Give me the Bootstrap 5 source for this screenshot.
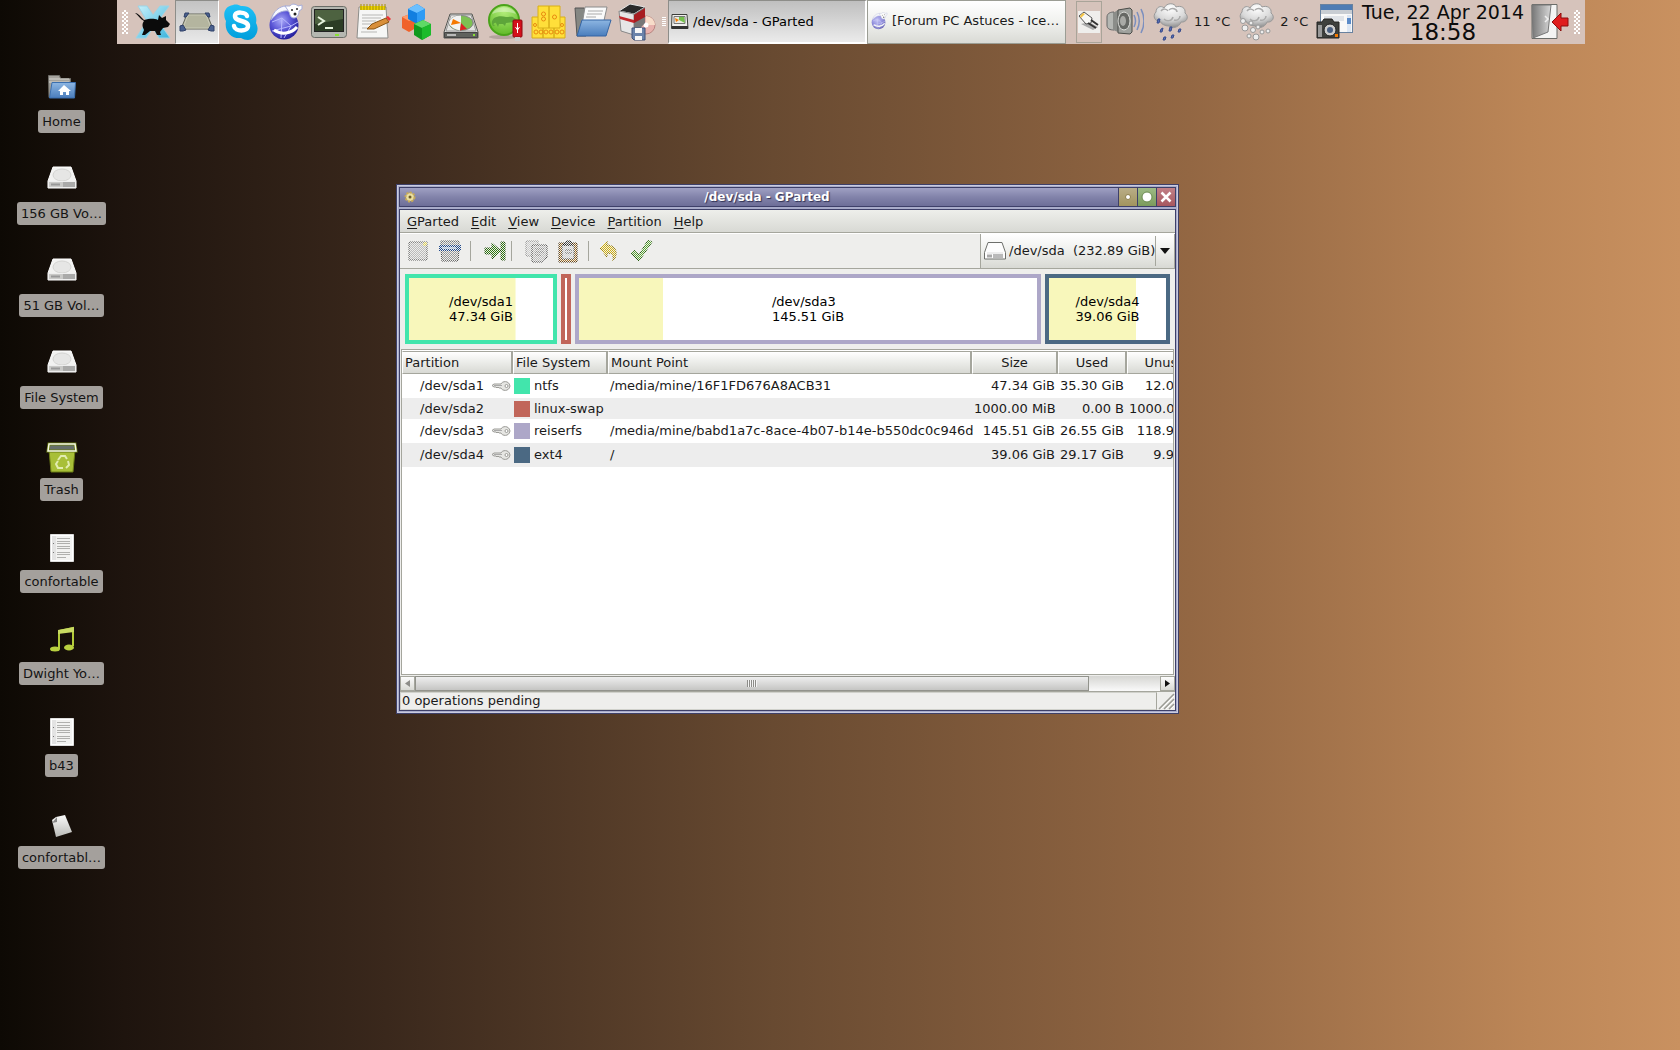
<!DOCTYPE html>
<html lang="en">
<head>
<meta charset="utf-8">
<meta name="viewport" content="width=device-width, initial-scale=1">
<title>/dev/sda - GParted</title>
<link href="https://cdn.jsdelivr.net/npm/bootstrap@5.3.0/dist/css/bootstrap.min.css" rel="stylesheet">
<style>
body{font-family:"DejaVu Sans",sans-serif;font-size:13px;line-height:16px;color:#1a1a1a;overflow:hidden;
 background:linear-gradient(90deg,#0d0904 0,#1e140e 7.4%,#3a281c 23%,#684a31 46%,#936743 70.8%,#bc8657 91%,#c99160 100%)}
button,select{font:inherit;color:inherit;padding:0;border:0;background:none}
svg{display:block;flex:none}
/* panel */
.desk-panel{height:44px;margin:0 95px 0 117px;background:#d6c3bb}
.grip{width:6px;height:24px;margin:0 3px 0 5px;background:repeating-conic-gradient(#fff 0 25%,transparent 0 50%) 0 0/4px 4px}
.grip-end{margin:0 5px 0 2px}
.grip-sm{width:4px;height:10px;margin:0 2px 0 3px;background:repeating-linear-gradient(#fff 0 1px,transparent 1px 2px)}
.launch{width:44px;height:44px;display:grid;place-items:center}
.launch.pressed{border:1px solid #8d8d89;border-right-color:#fff;border-bottom-color:#fff;background:linear-gradient(#c3c3c3,#e9e9e9)}
.task{height:44px;flex:1 1 0;min-width:0;max-width:199px;padding:0 6px 2px 2px;gap:4px;border:1px solid #9b9d94;background:linear-gradient(#fff,#f0f1ee 50%,#d9dad5)}
.task.pressed{border-width:1px 2px 2px 1px;border-color:#8d8d89 #fff #fff #8d8d89;background:linear-gradient(#bfbfbf,#ebebeb);color:#000;padding-bottom:0}
.usb{width:26px;height:42px;border:1px solid #a9a499;margin:0 4px 0 10px;display:grid;place-items:center}
.usb span{width:22px;height:22px;background:#efeeec}
.meteo{gap:4px;margin-left:9px}
.clock{width:170px;font-size:19px;line-height:19px;color:#0c0c0c;white-space:nowrap}
.clock-time{font-size:23px;line-height:20px}
/* desktop icons */
.desk-icons{width:123px;padding-top:22px}
.desk-item{height:92px;color:#111;text-decoration:none}
.desk-pic{height:44px}
.desk-label{height:23px;line-height:24px;padding:0 4px;border-radius:3px;background:#a4a09c;color:#141414}
/* window */
.win{position:absolute;left:396px;top:184px;width:783px;border:1px solid #3e4069;background:#a9acca;padding:2px;box-shadow:inset 0 0 0 1px #c9cbe0}
.win-title{border:1px solid #3e4069;height:20px;background:linear-gradient(#9fa0c3,#8283aa 50%,#6d6e98);color:#fff;font-size:12px;font-weight:bold;text-shadow:1px 1px 1px #2e3052}
.win-title .wbtn{width:19px;height:18px;border-left:1px solid #3e4069;display:grid;place-items:center}
.w-min{background:linear-gradient(#b9ad87,#a2945f)}
.w-max{background:linear-gradient(#9dba85,#7c9b5c)}
.w-close{background:linear-gradient(#c18087,#a7575f)}
.win-body{border:1px solid #3e4069;margin-top:2px;background:#eeeeec}
.menu-row{height:23px;padding:2px 0 0 1px;background:linear-gradient(#eeefeb,#d8d9d4);border-bottom:1px solid #a5a69d}
.menu-row button{padding:0 6px}
.menu-row u{text-underline-offset:2px}
.tool-row{height:36px;border-bottom:1px solid #a5a69d;border-top:1px solid #fff}
.tool{position:relative;width:24px;height:24px}
.tool::after{content:"";position:absolute;inset:0;background:repeating-conic-gradient(#eeeeec 0 25%,transparent 0 50%) 0 0/2px 2px}
.tsep{width:1px;height:20px;background:#a5a69d}
.device{width:195px;height:35px;border:1px solid #a5a69d;border-top:0;background:linear-gradient(#fff,#eeefec 50%,#d8d9d4);padding-left:3px}
.device select{appearance:none;flex:1;min-width:0;margin-left:3px;height:30px;outline:0}
.device .arrow{width:19px;height:30px;border-left:1px solid #a5a69d;display:grid;place-items:center}
.parts{height:80px;padding:5px;gap:4px}
.part{height:70px;border:4px solid;background:#fff linear-gradient(#f8f7bb,#f8f7bb) no-repeat;background-size:0 100%;display:grid;place-items:center;line-height:15px;color:#000}
.c-ntfs{border-color:#42e5ac}.c-swap{border-color:#c1665a}.c-reiser{border-color:#ada7c8}.c-ext4{border-color:#4b6983}
.swatch{width:16px;height:16px;flex:none;border:8px solid}
.c-ntfs.swatch{border-color:#42e5ac}.c-swap.swatch{border-color:#c1665a}.c-reiser.swatch{border-color:#ada7c8}.c-ext4.swatch{border-color:#4b6983}
.list-box{height:326px;margin:0 1px;border:1px solid #a5a69d;background:#fff;padding:1px 0 0}
.grid-tbl{table-layout:fixed;width:810px;border-collapse:separate;border-spacing:0}
.grid-tbl th{height:23px;padding:0 2px;font-weight:normal;border:1px solid #a5a69d;border-left-color:#fff;border-right-width:2px;background:linear-gradient(#fff,#edeeeb 45%,#d8d9d4)}
.grid-tbl td{height:24px;padding:0 2px;white-space:nowrap}
.grid-tbl tr.tight td{height:21px}
.grid-tbl tbody tr:nth-child(even) td{background:#ededed}
.grid-tbl .num{text-align:right;padding-right:3px}
.grid-tbl .dev{padding-left:18px}
.grid-tbl .fs{padding-left:1px}
.sbar{height:15px;margin-top:1px;background:linear-gradient(#d5d5d2,#fafafa)}
.sbar button{width:15px;height:15px;border:1px solid #a5a69d;background:linear-gradient(#fcfcfc,#d9dad5);display:grid;place-items:center}
.thumb{width:674px;border:1px solid #92938c;background:linear-gradient(#eee,#c5c5c3);display:grid;place-items:center}
.thumb span{width:10px;height:7px;background:repeating-linear-gradient(90deg,#8d8d89 0 1px,#f4f4f4 1px 2px)}
.status{height:19px;border-top:1px solid #a5a69d}
.status-text{line-height:16px;padding-left:1px;border:1px solid #d0d1cb;border-right-color:#a5a69d}
</style>
<script src="https://cdn.jsdelivr.net/npm/bootstrap@5.3.0/dist/js/bootstrap.bundle.min.js"></script>
</head>
<body class="vh-100">
<svg width="0" height="0" class="position-absolute" aria-hidden="true">
<defs>
<linearGradient id="gSteel" x1="0" y1="0" x2="0" y2="1"><stop offset="0" stop-color="#fafafa"/><stop offset="1" stop-color="#b9bab6"/></linearGradient>
<linearGradient id="gBlue" x1="0" y1="0" x2="0" y2="1"><stop offset="0" stop-color="#8db6e2"/><stop offset="1" stop-color="#4a7dbc"/></linearGradient>
<linearGradient id="gCyan" x1="0" y1="0" x2="1" y2="1"><stop offset="0" stop-color="#c9f1fb"/><stop offset="1" stop-color="#3bb4dc"/></linearGradient>
<linearGradient id="gSky" x1="0" y1="0" x2="0" y2="1"><stop offset="0" stop-color="#1fc0f6"/><stop offset="1" stop-color="#009edb"/></linearGradient>
<linearGradient id="gGray" x1="0" y1="0" x2="1" y2="0"><stop offset="0" stop-color="#777"/><stop offset="1" stop-color="#d8d8d8"/></linearGradient>
<radialGradient id="gGlobe" cx=".4" cy=".35" r=".7"><stop offset="0" stop-color="#a9a9f8"/><stop offset=".5" stop-color="#5a55d6"/><stop offset="1" stop-color="#1f1a96"/></radialGradient>
<radialGradient id="gCloud" cx=".5" cy=".2" r=".8"><stop offset="0" stop-color="#fff"/><stop offset=".6" stop-color="#d8d8d8"/><stop offset="1" stop-color="#8b8b8b"/></radialGradient>
<radialGradient id="gLime" cx=".5" cy=".2" r=".9"><stop offset="0" stop-color="#b4ee7c"/><stop offset="1" stop-color="#56b31e"/></radialGradient>
<symbol id="drive" viewBox="0 0 30 24"><path d="M6 1h18l5 14v7H1v-7z" fill="#f2f2f1" stroke="#fff"/><ellipse cx="15" cy="9" rx="9" ry="6" fill="#e6e6e5" stroke="#d4d4d2"/><path d="M1.500 15.500h27v6h-27z" fill="#c9c9c7" stroke="#eee"/><path d="M4 18.500h9" stroke="#999" stroke-width="2"/><path d="M17 16v5M19 16v5M21 16v5M23 16v5M25 16v5M27 16v5" stroke="#8b8b8b"/></symbol>
<symbol id="textdoc" viewBox="0 0 24 28"><path d="M.5.5h23v27H.5z" fill="#fff" stroke="#ddd"/><path d="M2 2h4v24H2z" fill="#e3e3e3"/><path d="M6 2h16v24H6z" fill="#f2f2f1"/><path d="M7 4.500h13M7 7.500h13M7 9.500h13M7 12.500h13M7 14.500h13M7 18.500h13M7 20.500h13M7 23.500h9" stroke="#b0b0ae"/><path d="M3 9h1v1H3zM3 18h1v1H3z" fill="#777"/></symbol>
<symbol id="disk" viewBox="0 0 36 30"><path d="M7 3h22l6 18v6H1v-6z" fill="#d9d9d7" stroke="#555753"/><path d="M8 4h20l5 16H3z" fill="#e4e4e2" stroke="#999"/><ellipse cx="18" cy="12" rx="12" ry="7.500" fill="#7dc152" stroke="#888"/><path d="M18 12V4.500c-7 0-12 3.500-12 7.500 1 4 6 6.500 11 7.500z" fill="#f3f3f3"/><path d="M10 8l8 4-10 2z" fill="#f57900"/><path d="M18 12l6 6-7 1.500z" fill="#d22"/><path d="M1.500 21.500h33v5h-33z" fill="#60625e" stroke="#444"/><path d="M4 24h9" stroke="#bbb" stroke-width="2"/><path d="M30 24h2" stroke="#8ae234" stroke-width="2"/></symbol>
<symbol id="globe" viewBox="0 0 36 38"><circle cx="17" cy="22" r="14.500" fill="url(#gGlobe)"/><path d="M5 19l10-4 9 8-7 12M15 15l-1 20M24 23l7-4M5 28l19-5" fill="none" stroke="#b9b9ff"/><path d="M4 17C6 8 13 3 19 3l3 5C14 7 9 11 4 17z" fill="#f7f8ff" stroke="#a7add8"/><path d="M7 27c7 5 17 4 23-3" fill="none" stroke="#fff" stroke-width="3"/><path d="M18 3l5 0c2-3 6-2 8 0l4-1v4l-3 2c0 4-2 7-5 7-4 0-4-4-5-6z" fill="#fff" stroke="#a7add8"/><circle cx="25" cy="7" r="1" fill="#222"/><circle cx="30" cy="6" r="1" fill="#222"/><circle cx="28" cy="11" r="1.500" fill="#222"/></symbol>
<symbol id="cloud" viewBox="0 0 36 26"><path d="M7 18C2 19-1 13 3 9c0-5 5-7 8-4 3-6 11-5 12-1 5-2 10 1 9 6 5 4 1 10-4 9-2 6-10 7-12 4-4 0-8-2-9-5z" fill="url(#gCloud)" stroke="#999"/><path d="M8 8c2-3 6-2 7 0M16 7c3-3 8-1 8 2M11 16c3 3 8 2 9-2M21 17c3 1 6-1 6-4" fill="none" stroke="#aaa" stroke-width="1.500"/></symbol>
<symbol id="key" viewBox="0 0 20 12"><path d="M1 5.500l2-1.500h7C11 1 18 0 19 6c-1 6-8 5-9 2H8L7 7 6 8 5 7H3z" fill="#e6e6e3" stroke="#9b9b97"/><circle cx="15.500" cy="6" r="1.500" fill="#fff" stroke="#9b9b97"/><path d="M3 5.500h8" stroke="#aaa"/></symbol>
</defs>
</svg>

<header class="desk-panel d-flex align-items-center">
 <span class="grip"></span>
 <button class="launch" aria-label="Applications"><svg width="36" height="38" viewBox="0 0 36 38"><path d="M3 3h9l6 9 7-9h9L23 18l12 17H24l-6-10-7 10H1l11-17z" fill="url(#gCyan)" stroke="#9bd4e6"/><path d="M0 10c3 0 5 3 9 7 5-1 9-2 14 0l1-5 3 3 4-2v4l4 4-2 3-5 1-3 4 1 3h-4l-2-4h-5l-5 4H7l2-5c-2-4-2-6 0-9C5 16 3 12 0 10z" fill="#0b0b0b"/></svg></button>
 <button class="launch pressed" aria-label="Show desktop"><svg width="36" height="20" viewBox="0 0 36 20"><path d="M8 2h20l6 15H2z" fill="#b4b59f" stroke="#65675b"/><path d="M9 3h18l5 13H4z" fill="none" stroke="#c9cab8"/><g fill="#4a618f" stroke="#2f4068"><path d="M6 1h4l-3 4H5zM26 1h4l1 4h-2zM1 14l3-1 3 5-3 1H1zM35 14l-3-1-3 5 3 1h3z"/></g></svg></button>
 <button class="launch" aria-label="Skype"><svg width="36" height="38" viewBox="0 0 36 38"><path d="M10 2c3-1 6 0 8 1 10-1 17 8 15 17 4 7 0 16-8 17-3 0-5-1-7-2C8 36 1 28 3 18-1 11 2 3 10 2z" fill="url(#gSky)"/><path d="M24 13c-1-4-12-5-12 0 0 6 13 4 13 10 0 6-13 6-14 0" fill="none" stroke="#fff" stroke-width="4.500" stroke-linecap="round"/></svg></button>
 <button class="launch" aria-label="Iceweasel"><svg width="36" height="38"><use href="#globe"/></svg></button>
 <button class="launch" aria-label="Terminal"><svg width="36" height="32" viewBox="0 0 36 32"><rect x=".5" y=".5" width="35" height="31" rx="3" fill="#b5b7b0" stroke="#6b6d67"/><rect x="3.500" y="3.500" width="29" height="22" fill="#2c3d25" stroke="#222"/><path d="M4 4h28v9L4 18z" fill="#4d6240"/><path d="M7 11l6 4-6 4" fill="none" stroke="#e8f5df" stroke-width="2"/><path d="M14 22h8" stroke="#e8f5df" stroke-width="2"/><path d="M24 29h4" stroke="#8ae234" stroke-width="2"/></svg></button>
 <button class="launch" aria-label="Notes"><svg width="36" height="36" viewBox="0 0 36 36"><path d="M4 3h27l2 31H2z" fill="#f6f6f5" stroke="#8d8d8a"/><path d="M5 2h25v4H5z" fill="#edd400"/><path d="M6 0v6M9 0v6M12 0v6M15 0v6M18 0v6M21 0v6M24 0v6M27 0v6M30 0v6" stroke="#a38d06"/><path d="M7 11h21M7 14h19M7 17h14M7 20h10M7 24h8M6 28h16" stroke="#b7b7b5"/><path d="M12 25l5-5 14-6 3 4-15 7z" fill="#d98f3a" stroke="#8a5413"/><path d="M31 13l2-1 3 3-2 2z" fill="#e33"/></svg></button>
 <button class="launch" aria-label="Packages"><svg width="32" height="36" viewBox="0 0 32 36"><path d="M1 13l8-3 6 4v10l-7 4-7-4z" fill="#f0622a"/><path d="M1 13l8-3 6 4-7 3z" fill="#ff9a6a"/><path d="M7 5l9-5 8 5v10l-8 5-9-5z" fill="#127fe0"/><path d="M7 5l9-5 8 5-8 4z" fill="#6cc0ff"/><path d="M16 9v11l8-5V5z" fill="#2f9bf4"/><path d="M13 20l9-4 8 4v11l-9 5-8-5z" fill="#0f9a1e"/><path d="M13 20l9-4 8 4-9 4z" fill="#5fd966"/><path d="M21 24v12l9-5V20z" fill="#1cbb2b"/></svg></button>
 <button class="launch pt-2" aria-label="GParted"><svg width="36" height="30"><use href="#disk"/></svg></button>
 <button class="launch" aria-label="ImageWriter"><svg width="36" height="38" viewBox="0 0 36 38"><ellipse cx="16" cy="34" rx="14" ry="2" fill="#b3a39c"/><circle cx="17" cy="17" r="15" fill="url(#gLime)" stroke="#4aa31a" stroke-width="2"/><path d="M5 21c-1-7 7-9 14-7 4 0 7-1 8 1l4 2-4 2-8 1-1 3-2-2h-4l-1 3-2-4c-2-1-4 3-1 2-1 2-3 1-3-2z" fill="#5da53a"/><path d="M5 11c4-9 20-9 24 0-7-3-17-3-24 0z" fill="#fff" opacity=".35"/><rect x="26" y="17" width="9" height="17" rx="1" fill="#d4101c" stroke="#8e0810"/><path d="M28 34h5v4h-5z" fill="#ccc"/><path d="M30.500 20v10M28.500 24l2 3 2-3" stroke="#fff" fill="none"/></svg></button>
 <button class="launch" aria-label="Mahjongg"><svg width="36" height="34" viewBox="0 0 36 34"><g fill="#ffdf3a" stroke="#d8ae18"><path d="M1 12h11v21H1zM12 12h11v21H12zM23 12h11v21H23z"/><path d="M7 1h11v22H7zM18 1h11v22H18z"/></g><g fill="none" stroke="#e88a10"><circle cx="12.500" cy="9" r="2"/><circle cx="12.500" cy="14" r="2"/><circle cx="23.500" cy="12" r="2"/><circle cx="4" cy="20" r="1.500"/><circle cx="5" cy="27" r="2"/><circle cx="10" cy="27" r="2"/><circle cx="15" cy="27" r="2"/><circle cx="20" cy="27" r="2"/><circle cx="26" cy="27" r="2"/><circle cx="31" cy="27" r="2"/><circle cx="31" cy="20" r="1.500"/></g></svg></button>
 <button class="launch" aria-label="Files"><svg width="38" height="32" viewBox="0 0 38 32"><path d="M1 2h9l2 3v25H3z" fill="#858783" stroke="#555"/><path d="M11 1h22l-4 18H8z" fill="#fafafa" stroke="#8b8b8b"/><path d="M14 5h15M13 8h15M12 11h10" stroke="#aaa"/><path d="M8 14h29l-5 16H3z" fill="url(#gBlue)" stroke="#3465a4"/></svg></button>
 <button class="launch" aria-label="Software installer"><svg width="38" height="38" viewBox="0 0 38 38"><circle cx="28" cy="22" r="9" fill="#e7b1ad" stroke="#b98580"/><path d="M28 13a9 9 0 0 1 9 9h-9z" fill="#f7dcc9"/><circle cx="28" cy="22" r="2.500" fill="#fff"/><path d="M1 8L12 1l15 3-11 7z" fill="#2a2a2a" stroke="#e5e5e5"/><path d="M1 8l15 3v21L3 28z" fill="#e6e6e6" stroke="#888"/><path d="M1 13l15 4v3L2 16z" fill="#c3272b"/><path d="M16 11L27 4v16l-11 12z" fill="#777"/><path d="M16 12l11-7v9l-11 6z" fill="#a81c20"/><path d="M14 25h13v12H16l-2-2z" fill="#6b83aa" stroke="#3c5178"/><path d="M17 25h7v5h-7zM17 33h7v4h-7z" fill="#f5f5f5"/></svg></button>
 <span class="grip-sm"></span>
 <button class="task pressed d-flex align-items-center"><svg width="18" height="16" viewBox="0 0 18 16"><path d="M1 .5h15l1 14H.5z" fill="#f0f0ee" stroke="#3c3e3a"/><path d="M3 2.500h11v7H3z" fill="#e9e9e2" stroke="#777"/><path d="M8 6V3h5l1 6z" fill="#73c04c"/><path d="M4 4l4 2-3 2z" fill="#f57900"/><path d="M1 12h16v3H1z" fill="#333"/></svg><span class="text-truncate">/dev/sda - GParted</span></button>
 <button class="task d-flex align-items-center"><svg width="18" height="18" opacity=".6"><use href="#globe"/></svg><span class="text-nowrap">[Forum PC Astuces - Ice…</span></button>
 <div class="usb"><span><svg width="22" height="22" viewBox="0 0 22 22"><path d="M3 13l12 6 5-3-9-5z" fill="#aaa"/><path d="M1 5l5-4 8 6-1 5-5 1z" fill="#f8f8f6" stroke="#555"/><path d="M2 5l3-3 2 1-4 4z" fill="#f6c544"/><path d="M13 9l7 5M10 12l8 5" stroke="#333" stroke-width="2"/></svg></span></div>
 <svg width="38" height="30" viewBox="0 0 38 30"><path d="M1 10c0-4 4-5 7-5v18c-4 0-7-1-7-5z" fill="#b5b7b3" stroke="#666"/><path d="M7 6l5-3v22l-5-2z" fill="#8b8d89"/><path d="M12 3l12-2 2 2v22l-2 2-12-1z" fill="#9fa19d" stroke="#4a4c48"/><ellipse cx="18" cy="14" rx="6" ry="9" fill="#666864" stroke="#dcddd9"/><ellipse cx="17" cy="14" rx="3" ry="5" fill="#a9aaa6"/><path d="M28 8c2 4 2 8 0 12M31 5c3 6 3 12 0 18M35 2c4 8 4 16 0 24" fill="none" stroke="#7b8fbf" stroke-width="1.500"/></svg>
 <div class="meteo d-flex align-items-center"><svg width="37" height="38" viewBox="0 0 37 38"><use href="#cloud" width="36" height="26"/><g fill="#5b72b8" stroke="#384c8c"><path d="M5 16l2 0-1 4h-2zM8 26l2-1-1 4h-2zM17 24h2l-1 4h-2zM26 26h2l-1 3h-2zM19 32h2l-1 3h-2zM11 34h2l-1 3h-2z"/></g></svg><span>11 °C</span></div>
 <div class="meteo d-flex align-items-center"><svg width="37" height="38" viewBox="0 0 37 38"><use href="#cloud" width="36" height="26"/><g fill="#eee" stroke="#999"><circle cx="4" cy="18" r="2.500"/><circle cx="12" cy="20" r="2"/><circle cx="6" cy="25" r="3"/><circle cx="14" cy="27" r="2.500"/><circle cx="23" cy="29" r="2"/><circle cx="29" cy="28" r="2"/><circle cx="17" cy="34" r="3"/><circle cx="10" cy="33" r="2"/><circle cx="19" cy="24" r="2"/></g></svg><span>2 °C</span></div>
 <button class="launch ms-1" aria-label="Screenshot"><svg width="37" height="36" viewBox="0 0 37 36"><rect x="4.500" y=".5" width="32" height="28" fill="#f8f8f8" stroke="#69829f"/><path d="M5 1h31v5H5z" fill="#4e7cb4"/><path d="M5 6h31v4H5z" fill="#c8cdd3"/><path d="M8 12h20v5H8z" fill="#dfe3e8"/><path d="M31 11h4v17h-4z" fill="#dce6f3"/><path d="M31 14h4v6h-4z" fill="#5a8ac8"/><path d="M1 18h5l2-3h8l2 3h5v16H1z" fill="#3e403d" stroke="#222"/><path d="M2 21h4v12H2z" fill="#999"/><circle cx="14" cy="26" r="6" fill="#ccc" stroke="#222"/><circle cx="14" cy="26" r="3" fill="#4a5f80"/><path d="M19 30h3v3h-3z" fill="#f57900"/></svg></button>
 <time class="clock text-center ms-auto" datetime="2014-04-22T18:58"><div>Tue, 22 Apr 2014</div><div class="clock-time">18:58</div></time>
 <button class="launch" aria-label="Log out"><svg width="38" height="36" viewBox="0 0 38 36"><path d="M1 .5h25v34H1z" fill="#f4f4f3" stroke="#6b6d69"/><path d="M1 1h19L17 28 2 34z" fill="url(#gGray)" stroke="#777"/><path d="M14 12l3 3-3 3" fill="none" stroke="#eee" stroke-width="1.500"/><path d="M21 18l9-9v5h7v8h-7v5z" fill="#df1d1d" stroke="#8c0d0d"/></svg></button>
 <span class="grip grip-end"></span>
</header>

<nav class="desk-icons d-flex flex-column" aria-label="Desktop">
 <a class="desk-item d-flex flex-column align-items-center" href="#"><span class="desk-pic pt-2"><svg width="28" height="25" viewBox="0 0 28 25"><path d="M.5 1.500h11l1 3h10v19H1z" fill="#a5a39d" stroke="#6f6e69"/><path d="M1 5h20M1 8h20" stroke="#d4d3cf"/><path d="M4 8.500h23.500L26.500 24H1.500z" fill="url(#gBlue)" stroke="#3b6fae"/><path d="M16 11l7 6h-2v4h-3v-3h-3v3h-3v-4h-2z" fill="#fff"/></svg></span><span class="desk-label">Home</span></a>
 <a class="desk-item d-flex flex-column align-items-center" href="#"><span class="desk-pic pt-2"><svg width="30" height="24"><use href="#drive"/></svg></span><span class="desk-label">156 GB Vo…</span></a>
 <a class="desk-item d-flex flex-column align-items-center" href="#"><span class="desk-pic pt-2"><svg width="30" height="24"><use href="#drive"/></svg></span><span class="desk-label">51 GB Vol…</span></a>
 <a class="desk-item d-flex flex-column align-items-center" href="#"><span class="desk-pic pt-2"><svg width="30" height="24"><use href="#drive"/></svg></span><span class="desk-label">File System</span></a>
 <a class="desk-item d-flex flex-column align-items-center" href="#"><span class="desk-pic pt-2"><svg width="32" height="31" viewBox="0 0 32 31"><path d="M3 8h26l-2 22H5z" fill="#a8bf38" stroke="#6b7c14"/><path d="M3 2h26l1 7H2z" fill="#66706a" stroke="#6b7c14" stroke-width="3"/><path d="M3 2h26l1 7H2z" fill="none" stroke="#f4f8e6" stroke-width="1.500"/><path d="M12 18l3-4h4l2 3M22 19l1 4-3 3M17 26h-5l-2-4 2-3" fill="none" stroke="#e2ecb0" stroke-width="2"/></svg></span><span class="desk-label">Trash</span></a>
 <a class="desk-item d-flex flex-column align-items-center" href="#"><span class="desk-pic pt-2"><svg width="24" height="28"><use href="#textdoc"/></svg></span><span class="desk-label">confortable</span></a>
 <a class="desk-item d-flex flex-column align-items-center" href="#"><span class="desk-pic pt-2"><svg width="26" height="26" viewBox="0 0 26 26"><path d="M10 23V5l14-3v18" fill="none" stroke="#b4cc3a" stroke-width="2"/><path d="M9 4l16-3v5L9 8z" fill="#c8da62"/><ellipse cx="6" cy="23" rx="5" ry="2.500" fill="#b9d040"/><ellipse cx="20" cy="21.500" rx="5" ry="3" fill="#b9d040"/></svg></span><span class="desk-label">Dwight Yo…</span></a>
 <a class="desk-item d-flex flex-column align-items-center" href="#"><span class="desk-pic pt-2"><svg width="24" height="28"><use href="#textdoc"/></svg></span><span class="desk-label">b43</span></a>
 <a class="desk-item d-flex flex-column align-items-center" href="#"><span class="desk-pic pt-2"><svg width="22" height="28" viewBox="0 -5 22 28"><path d="M1 5l4-3 9-2 7 17-16 5z" fill="url(#gSteel)"/><path d="M1 8l5-1V2z" fill="#888"/></svg></span><span class="desk-label">confortabl…</span></a>
</nav>

<main class="win">
 <div class="win-title d-flex align-items-center">
  <svg class="ms-1" width="12" height="12" viewBox="0 0 12 12"><circle cx="6" cy="6" r="4" fill="#e8d58c" stroke="#c5a95a" stroke-width="3" stroke-dasharray="2 1"/><circle cx="6" cy="6" r="3.500" fill="#eadf9f"/><circle cx="6" cy="6" r="1.500" fill="#6b5a2c"/></svg>
  <span class="flex-fill text-center">/dev/sda - GParted</span>
  <button class="wbtn w-min" aria-label="Minimize"><svg width="14" height="14" viewBox="0 0 14 14"><circle cx="7" cy="7" r="2.500" fill="#fff" stroke="#8c7e4c"/></svg></button>
  <button class="wbtn w-max" aria-label="Maximize"><svg width="14" height="14" viewBox="0 0 14 14"><circle cx="7" cy="7" r="5" fill="#fff" stroke="#6b8a50"/></svg></button>
  <button class="wbtn w-close" aria-label="Close"><svg width="14" height="14" viewBox="0 0 14 14"><path d="M2.500 2.500l9 9M11.500 2.500l-9 9" stroke="#fff" stroke-width="2.500"/></svg></button>
 </div>
 <div class="win-body">
  <div class="menu-row d-flex align-items-center"><button><u>G</u>Parted</button><button><u>E</u>dit</button><button><u>V</u>iew</button><button><u>D</u>evice</button><button><u>P</u>artition</button><button><u>H</u>elp</button></div>
  <div class="tool-row d-flex align-items-center">
   <button class="tool" style="margin-left:6px" aria-label="New"><svg width="24" height="24" viewBox="0 0 24 24"><path d="M3 3h18v18H3z" fill="#bbb" stroke="#555"/><circle cx="19" cy="5" r="2" fill="#ead94c"/></svg></button>
   <button class="tool ms-2" aria-label="Delete"><svg width="24" height="24" viewBox="0 0 24 24"><path d="M3 10h18l-1 12H4z" fill="#999" stroke="#444"/><path d="M3 2h18v5H3z" fill="#999" stroke="#555"/><path d="M1 6h22v6H1z" fill="#224a8c"/><path d="M4 9h14" stroke="#cde" stroke-width="1.500"/></svg></button>
   <span class="tsep mx-2"></span>
   <button class="tool ms-1" aria-label="Resize"><svg width="24" height="24" viewBox="0 0 24 24"><path d="M2 9h7V4l9 8-9 8v-5H2z" fill="#2f7a0e" stroke="#1c4a08"/><path d="M18 3h4v18h-4z" fill="#2f7a0e" stroke="#1c4a08"/></svg></button>
   <span class="tsep ms-1 me-2"></span>
   <button class="tool ms-1" aria-label="Copy"><svg width="24" height="24" viewBox="0 0 24 24"><path d="M2 2h12v15H2z" fill="#ccc" stroke="#888"/><path d="M8 6h15v12l-4 5H8z" fill="#bbb" stroke="#444"/><path d="M11 10h9M11 13h9M11 16h6" stroke="#777"/></svg></button>
   <button class="tool ms-2" aria-label="Paste"><svg width="24" height="24" viewBox="0 0 24 24"><path d="M3 4h18v19H3z" fill="#a87428" stroke="#3d2505"/><path d="M6 6h12v14H6z" fill="#ccc" stroke="#444"/><path d="M7 6l3-4h4l3 4z" fill="#555" stroke="#111"/><path d="M9 11h7M9 14h7" stroke="#555"/></svg></button>
   <span class="tsep mx-2"></span>
   <button class="tool" aria-label="Undo"><svg width="24" height="24" viewBox="0 0 24 24"><path d="M3 9l7-7v4c9 0 12 9 6 16 1-6-1-8-6-8v4z" fill="#d2b110" stroke="#8a6f00"/></svg></button>
   <button class="tool ms-2" aria-label="Apply"><svg width="24" height="24" viewBox="0 0 24 24"><path d="M2 14l4-3 4 5L19 1l4 2-13 19z" fill="#5aa832" stroke="#2a6212"/></svg></button>
   <div class="device d-flex align-items-center ms-auto">
    <svg width="22" height="18" viewBox="0 0 22 18"><path d="M4 .5h14l3.500 10V17H.5v-6.500z" fill="#fdfdfd" stroke="#6d6f6b"/><path d="M3 11h16" stroke="#ddd"/><path d="M3 14h5" stroke="#aaa" stroke-width="3"/><path d="M10 12v4M12 12v4M14 12v4M16 12v4M18 12v4" stroke="#777"/></svg>
    <select aria-label="Device"><option>/dev/sda&nbsp; (232.89 GiB)</option></select>
    <span class="arrow"><svg width="10" height="6" viewBox="0 0 10 6"><path d="M0 0h10L5 6z" fill="#111"/></svg></span>
   </div>
  </div>
  <div class="parts d-flex">
   <div class="part c-ntfs" style="flex:144 1 8px;background-size:74% 100%"><div>/dev/sda1<br>47.34 GiB</div></div>
   <div class="part c-swap" style="flex:0 0 10px"></div>
   <div class="part c-reiser" style="flex:458 1 8px;background-size:18.4% 100%"><div>/dev/sda3<br>145.51 GiB</div></div>
   <div class="part c-ext4" style="flex:117 1 8px;background-size:74.6% 100%"><div>/dev/sda4<br>39.06 GiB</div></div>
  </div>
  <div class="list-box overflow-hidden">
   <table class="grid-tbl">
    <colgroup><col style="width:111px"><col style="width:95px"><col style="width:364px"><col style="width:86px"><col style="width:69px"><col style="width:85px"></colgroup>
    <thead><tr><th>Partition</th><th>File System</th><th>Mount Point</th><th class="text-center">Size</th><th class="text-center">Used</th><th class="text-center">Unused</th></tr></thead>
    <tbody>
    <tr><td class="dev"><div class="d-flex align-items-center justify-content-between">/dev/sda1<svg width="20" height="12"><use href="#key"/></svg></div></td><td class="fs"><div class="d-flex align-items-center gap-1"><span class="swatch c-ntfs"></span>ntfs</div></td><td>/media/mine/16F1FD676A8ACB31</td><td class="num">47.34 GiB</td><td class="num">35.30 GiB</td><td class="num">12.04 GiB</td></tr>
    <tr class="tight"><td class="dev">/dev/sda2</td><td class="fs"><div class="d-flex align-items-center gap-1"><span class="swatch c-swap"></span>linux-swap</div></td><td></td><td class="num">1000.00 MiB</td><td class="num">0.00 B</td><td class="num">1000.00 MiB</td></tr>
    <tr><td class="dev"><div class="d-flex align-items-center justify-content-between">/dev/sda3<svg width="20" height="12"><use href="#key"/></svg></div></td><td class="fs"><div class="d-flex align-items-center gap-1"><span class="swatch c-reiser"></span>reiserfs</div></td><td>/media/mine/babd1a7c-8ace-4b07-b14e-b550dc0c946d</td><td class="num">145.51 GiB</td><td class="num">26.55 GiB</td><td class="num">118.96 GiB</td></tr>
    <tr><td class="dev"><div class="d-flex align-items-center justify-content-between">/dev/sda4<svg width="20" height="12"><use href="#key"/></svg></div></td><td class="fs"><div class="d-flex align-items-center gap-1"><span class="swatch c-ext4"></span>ext4</div></td><td>/</td><td class="num">39.06 GiB</td><td class="num">29.17 GiB</td><td class="num">9.90 GiB</td></tr>
    </tbody>
   </table>
  </div>
  <div class="sbar d-flex">
   <button aria-label="Scroll left"><svg width="5" height="7" viewBox="0 0 5 7"><path d="M5 0v7L0 3.500z" fill="#8d8d89"/></svg></button>
   <div class="thumb"><span></span></div>
   <button class="ms-auto" aria-label="Scroll right"><svg width="5" height="7" viewBox="0 0 5 7"><path d="M0 0v7l5-3.500z" fill="#111"/></svg></button>
  </div>
  <footer class="status d-flex"><div class="status-text flex-fill">0 operations pending</div><svg width="18" height="18" viewBox="0 0 18 18"><path d="M2 17L17 2M7 17L17 7M12 17l5-5" stroke="#9a9b94" stroke-width="1.500"/><path d="M4 17L17 4M9 17l8-8M14 17l3-3" stroke="#fff"/></svg></footer>
 </div>
</main>
</body>
</html>
